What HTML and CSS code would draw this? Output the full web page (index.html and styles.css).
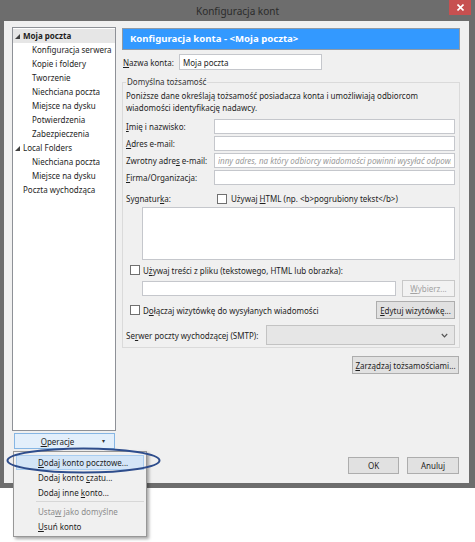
FILE: index.html
```html
<!DOCTYPE html>
<html lang="pl">
<head>
<meta charset="utf-8">
<title>Konfiguracja kont</title>
<link rel="stylesheet" href="styles.css">
</head>
<body>
<div class="window">
  <div class="titlebar">
    <span></span>
    <span class="title">Konfiguracja kont</span>
    <span class="close"><svg width="7" height="7" viewBox="0 0 7 7"><path d="M0.5 0.5L6.5 6.5M6.5 0.5L0.5 6.5" stroke="#fff" stroke-width="1.6"/></svg></span>
  </div>
  <div class="client">
    <div class="top">
      <div class="sidebar">
        <ul class="tree">
          <li class="l0 sel"><svg class="tri" width="5" height="5" viewBox="0 0 5 5"><polygon points="5,0 5,5 0,5" fill="#404040"/></svg><b>Moja poczta</b></li>
          <li class="l1">Konfiguracja serwera</li>
          <li class="l1">Kopie i foldery</li>
          <li class="l1">Tworzenie</li>
          <li class="l1">Niechciana poczta</li>
          <li class="l1">Miejsce na dysku</li>
          <li class="l1">Potwierdzenia</li>
          <li class="l1">Zabezpieczenia</li>
          <li class="l0"><svg class="tri" width="5" height="5" viewBox="0 0 5 5"><polygon points="5,0 5,5 0,5" fill="#404040"/></svg>Local Folders</li>
          <li class="l1">Niechciana poczta</li>
          <li class="l1">Miejsce na dysku</li>
          <li class="leaf0">Poczta wychodząca</li>
        </ul>
        <button class="ops"><span><u>O</u>peracje</span><span class="arrow">▾</span></button>
      </div>
      <div class="main">
        <div class="header">Konfiguracja konta - &lt;Moja poczta&gt;</div>
        <div class="name-row">
          <label class="name-label"><u>N</u>azwa konta:</label>
          <input class="field name-field" type="text" value="Moja poczta">
        </div>
        <fieldset class="group">
          <legend>Domyślna tożsamość</legend>
          <p class="desc">Poniższe dane określają tożsamość posiadacza konta i umożliwiają odbiorcom<br>wiadomości identyfikację nadawcy.</p>
          <div class="form-grid">
            <label><u>I</u>mię i nazwisko:</label><input class="field" type="text">
            <label><u>A</u>dres e-mail:</label><input class="field" type="text">
            <label>Zwrotny adre<u>s</u> e-mail:</label><input class="field ph" type="text" placeholder="inny adres, na który odbiorcy wiadomości powinni wysyłać odpowiedzi">
            <label><u>F</u>irma/Organizacja:</label><input class="field" type="text">
          </div>
          <div class="sig-row">
            <span class="sig-label">Sygnatur<u>k</u>a:</span>
            <span class="cb"></span>
            <span class="cb-text">Używaj <u>H</u>TML (np. &lt;b&gt;pogrubiony tekst&lt;/b&gt;)</span>
          </div>
          <div class="textarea"></div>
          <div class="check-row">
            <span class="cb"></span>
            <span class="cb-text2">U<u>ż</u>ywaj treści z pliku (tekstowego, HTML lub obrazka):</span>
          </div>
          <div class="file-row">
            <input class="field file-field" type="text">
            <button class="btn disabled"><u>W</u>ybierz...</button>
          </div>
          <div class="card-row">
            <span class="cb"></span>
            <span class="cb-text2">D<u>o</u>łączaj wizytówkę do wysyłanych wiadomości</span>
            <button class="btn card-btn"><u>E</u>dytuj wizytówkę...</button>
          </div>
          <div class="smtp-row">
            <span>Se<u>r</u>wer poczty wychodzącej (SMTP):</span>
            <div class="select"><svg width="7" height="5" viewBox="0 0 7 5"><path d="M0.8 1L3.5 3.8L6.2 1" fill="none" stroke="#555" stroke-width="1.2"/></svg></div>
          </div>
        </fieldset>
        <button class="btn manage"><u>Z</u>arządzaj tożsamościami...</button>
      </div>
    </div>
    <div class="footer">
      <button class="btn ok">OK</button>
      <button class="btn cancel">Anuluj</button>
    </div>
  </div>
  <div class="menu">
    <div class="item hl"><u>D</u>odaj konto pocztowe...</div>
    <div class="item">Dodaj konto <u>c</u>zatu...</div>
    <div class="item">Dodaj inne <u>k</u>onto...</div>
    <div class="sep"></div>
    <div class="item dis">Usta<u>w</u> jako domyślne</div>
    <div class="item"><u>U</u>suń konto</div>
  </div>
  <svg class="ring" width="158" height="28" viewBox="0 0 158 28"><ellipse cx="78.5" cy="13.5" rx="76" ry="12" fill="none" stroke="#2e4d8c" stroke-width="2"/></svg>
</div>
</body>
</html>
```
FILE: styles.css
```css
* { box-sizing: border-box; }
html, body { margin: 0; padding: 0; background: #ffffff; }
body {
  width: 475px;
  height: 542px;
  overflow: hidden;
  font-family: "Noto Sans", "Liberation Sans", sans-serif;
  font-size: 8px;
  color: #1e1e1e;
}
u { text-decoration: underline; text-underline-offset: 1px; }
.window {
  position: relative;
  width: 475px;
  background: #6d6d6d;
  padding-bottom: 5px;
}
.titlebar {
  height: 21px;
  display: grid;
  grid-template-columns: 1fr auto 1fr;
}
.title {
  font-size: 10px;
  line-height: 22px;
  color: #2b2b2b;
}
.close {
  justify-self: end;
  margin-right: 4px;
  width: 22px;
  height: 15px;
  background: #c75050;
  display: flex;
  align-items: center;
  justify-content: center;
}
.client {
  margin: 0 6px 0 4px;
  height: 462px;
  background: #f0f0f0;
  padding: 6px 9px 9px 8px;
  display: flex;
  flex-direction: column;
}
.top {
  flex: 1;
  display: flex;
  gap: 6px;
  min-height: 0;
}
.sidebar {
  width: 104px;
  display: flex;
  flex-direction: column;
}
.tree {
  flex: 1;
  margin: 0;
  padding: 1px 0 0;
  list-style: none;
  background: #fff;
  border: 1px solid #8e9197;
}
.tree li {
  height: 14px;
  line-height: 14px;
  display: flex;
  align-items: center;
  white-space: nowrap;
}
.tree li.l0 { padding-left: 2px; }
.tree li.l1 { padding-left: 19px; }
.tree li.leaf0 { padding-left: 10px; }
.tree li.sel { background: #e6e6e6; }
.tree .tri { margin-right: 3px; margin-top: 1px; }
.ops {
  margin: 2px 0 0 2px;
  width: 101px;
  height: 16px;
  padding: 0;
  background: #e3effb;
  border: 1px solid #86b6e4;
  font: inherit;
  color: inherit;
  display: grid;
  grid-template-columns: 1fr 14px;
  align-items: center;
}
.ops .arrow { font-size: 6px; color: #333; text-align: left; padding-left: 2px; }
.main {
  width: 338px;
  display: flex;
  flex-direction: column;
}
.header {
  margin-top: 1px;
  height: 22px;
  background: #3399ff;
  border: 1px solid #8f9aa6;
  color: #fff;
  font-weight: bold;
  font-size: 9.6px;
  line-height: 20px;
  padding-left: 7px;
}
.name-row {
  margin-top: 4px;
  height: 16px;
  display: flex;
  align-items: center;
}
.name-label { width: 57px; padding-left: 1px; }
.field {
  display: block;
  height: 15px;
  margin: 0;
  padding: 0 3px;
  border: 1px solid #c5c7cc;
  background: #fff;
  font: inherit;
  color: inherit;
  outline: none;
}
.name-field { width: 143px; height: 16px; }
.ph::placeholder { color: #9a9a9a; font-style: italic; }
.group {
  margin: 7px 0 0;
  padding: 0 4px 2px 3px;
  border: 1px solid #dadada;
  min-width: 0;
}
.group legend {
  padding: 0 1px;
  line-height: 10px;
  color: #333;
}
.desc {
  margin: 3px 0 0;
  line-height: 12px;
  white-space: nowrap;
}
.form-grid {
  margin-top: 5px;
  display: grid;
  grid-template-columns: 88px 1fr;
  row-gap: 2px;
  align-items: center;
}
.form-grid label { white-space: nowrap; }
.form-grid .field { width: 100%; }
.sig-row {
  margin-top: 8px;
  height: 11px;
  display: flex;
  align-items: center;
}
.sig-label { width: 91px; }
.cb {
  width: 10px;
  height: 10px;
  border: 1px solid #707070;
  background: #fff;
  flex: none;
}
.cb-text { margin-left: 4px; white-space: nowrap; }
.cb-text2 { margin-left: 3px; white-space: nowrap; }
.textarea {
  margin: 3px 0 0 16px;
  height: 53px;
  background: #fff;
  border: 1px solid #c5c7cc;
}
.check-row {
  margin-top: 5px;
  height: 10px;
  padding-left: 4px;
  display: flex;
  align-items: center;
}
.file-row {
  margin-top: 5px;
  padding-left: 16px;
  height: 17px;
  display: flex;
  align-items: center;
}
.file-field { width: 254px; }
.btn {
  height: 17px;
  padding: 0;
  margin: 0;
  background: #e1e1e1;
  border: 1px solid #adadad;
  font: inherit;
  color: inherit;
  white-space: nowrap;
}
.btn.disabled {
  margin-left: auto;
  width: 53px;
  color: #a3a3a3;
  background: #f2f2f2;
  border-color: #c8c8c8;
}
.card-row {
  margin-top: 4px;
  height: 18px;
  padding-left: 4px;
  display: flex;
  align-items: center;
}
.card-btn { margin-left: auto; width: 79px; height: 18px; }
.smtp-row {
  margin-top: 6px;
  height: 20px;
  display: flex;
  align-items: center;
}
.select {
  margin-left: auto;
  width: 189px;
  height: 20px;
  background: #e6e6e6;
  border: 1px solid #c3c3c3;
  display: flex;
  align-items: center;
  justify-content: flex-end;
  padding-right: 6px;
}
.manage {
  margin-top: 8px;
  align-self: flex-end;
  margin-right: 1px;
  width: 107px;
  height: 18px;
}
.footer {
  margin-top: 8px;
  display: flex;
  justify-content: flex-end;
  gap: 8px;
  padding-right: 1px;
}
.ok { width: 51px; }
.cancel { width: 52px; }
.menu {
  position: absolute;
  left: 13px;
  top: 451px;
  width: 134px;
  padding: 3px 2px 2px;
  background: #f0f0f0;
  border: 1px solid #979797;
  box-shadow: 2px 2px 3px rgba(0,0,0,0.35);
  z-index: 2;
}
.menu .item {
  height: 15px;
  line-height: 15px;
  padding-left: 22px;
  white-space: nowrap;
}
.menu .item.hl {
  background: #d3e5f7;
  outline: 1px solid #a8cdf0;
  outline-offset: -1px;
}
.menu .item.dis { color: #8d8d8d; }
.menu .sep {
  margin: 1px 0 2px 20px;
  border-top: 1px solid #d7d7d7;
}
.ring {
  position: absolute;
  left: 5px;
  top: 447px;
  z-index: 3;
}
```
